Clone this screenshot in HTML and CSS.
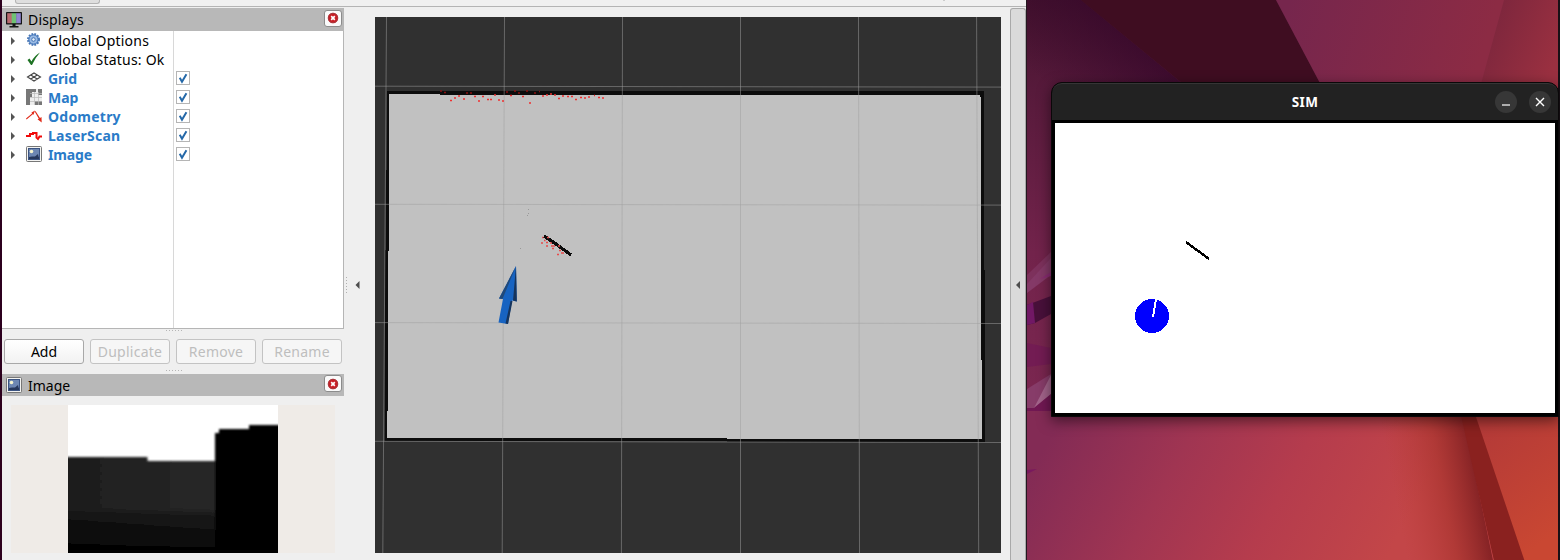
FILE: index.html
```html
<!DOCTYPE html>
<html lang="en">
<head>
<meta charset="utf-8">
<title>RViz and SIM</title>
<link rel="stylesheet" href="styles.css">
</head>
<body>
<svg class="defs" width="0" height="0">
  <defs>
    <symbol id="i-arrow" viewBox="0 0 6 8"><path d="M1 0L5 4L1 8Z" fill="#555"/></symbol>
    <symbol id="i-check" viewBox="0 0 14 14"><path d="M3.2 6.8L5.8 11.300L11 2.500" fill="none" stroke="#2468a8" stroke-width="2.300"/></symbol>
    <symbol id="i-image" viewBox="0 0 16 16"><rect x=".5" y=".5" width="15" height="15" rx="1" fill="#f4f4f2" stroke="#777"/><rect x="2" y="2" width="12" height="12" fill="#3c5482"/><rect x="3" y="3" width="10" height="8" fill="#6d87b2"/><circle cx="5.500" cy="5.500" r="1.800" fill="#f6f5d0"/><path d="M3 11L6 10.500L9 10.500L12 8L12.500 10.500L13 11V13H3Z" fill="#26385c"/></symbol>
    <symbol id="i-close" viewBox="0 0 12 12"><circle cx="6" cy="6" r="5.200" fill="#c91d24"/><circle cx="6" cy="6" r="4.700" fill="none" stroke="#a53a40"/><path d="M4.200 4.200L7.800 7.800M7.800 4.200L4.200 7.800" stroke="#fff" stroke-width="1.700"/></symbol>
  </defs>
</svg>
<main class="screen">
  <section class="rviz">
    <div class="toolbar"><div class="tool"></div><i class="speck"></i></div>
    <div class="workspace">
      <aside class="dock">
        <header class="dock-title">
          <svg class="icon" viewBox="0 0 16 16"><rect width="16" height="12.500" rx=".7" fill="#151515"/><rect x="1.200" y="1.200" width="4.800" height="10" fill="#b96a70"/><rect x="5.700" y="1.200" width="4.800" height="10" fill="#6fc274"/><rect x="10.200" y="1.200" width="4.600" height="10" fill="#9185d2"/><path d="M6.500 12H9.500V14H12.500V15.500H3.500V14H6.500Z" fill="#151515"/></svg>
          <span class="t-displays">Displays</span>
          <button class="close"><svg viewBox="0 0 12 12"><use href="#i-close"/></svg></button>
        </header>
        <div class="tree">
          <div class="row"><svg class="expander"><use href="#i-arrow"/></svg><svg class="icon" viewBox="0 0 16 16"><circle cx="7.500" cy="7.500" r="5.500" fill="#8fb2df" stroke="#4876b5" stroke-width="2" stroke-dasharray="1.700 1.200"/><circle cx="7.500" cy="7.500" r="4.500" fill="#9abae4" stroke="#4f7fbf"/><circle cx="7.500" cy="7.500" r="1.800" fill="#e5effb" stroke="#4574b3"/></svg><span class="label plain t-opt">Global Options</span></div>
          <div class="row"><svg class="expander"><use href="#i-arrow"/></svg><svg class="icon" viewBox="0 0 16 16"><path d="M1.500 9L3.500 7.500L5.500 10.500Q8.500 4.500 14 1.500Q9 7 6 14H5Z" fill="#1d7223"/></svg><span class="label plain t-status">Global Status: Ok</span></div>
          <div class="row"><svg class="expander"><use href="#i-arrow"/></svg><svg class="icon" viewBox="0 0 16 16"><path d="M1.500 7L8 3L14.500 7L8 11ZM4.800 5L11.200 9M11.200 5L4.800 9" fill="none" stroke="#444" stroke-width="1.100"/></svg><span class="label t-grid">Grid</span><span class="box"><svg><use href="#i-check"/></svg></span></div>
          <div class="row"><svg class="expander"><use href="#i-arrow"/></svg><svg class="icon" viewBox="0 0 16 16" shape-rendering="crispEdges"><rect width="16" height="16" fill="#eee"/><path d="M0 0H10V3H6V8H4V16H0ZM12 0H16V6H12ZM9 12H16V16H9Z" fill="#777"/><path d="M4 4H16M4 8H16M4 12H16M8 3V16M12 3V16" stroke="#bbb" fill="none" stroke-width=".7"/></svg><span class="label t-map">Map</span><span class="box"><svg><use href="#i-check"/></svg></span></div>
          <div class="row"><svg class="expander"><use href="#i-arrow"/></svg><svg class="icon" viewBox="0 0 16 16"><path d="M0 10.500L6 5.500L5.500 4.500L9 2.500L7.500 6.800L6.800 6.200L.6 11.600ZM9.500 3L14 10L15.500 9L15.700 14.500L11.500 11.200L12.800 10.700L8.800 3.800Z" fill="#e02a18"/></svg><span class="label t-odom">Odometry</span><span class="box"><svg><use href="#i-check"/></svg></span></div>
          <div class="row"><svg class="expander"><use href="#i-arrow"/></svg><svg class="icon" viewBox="0 0 16 16"><path d="M0 9H4V7H7V6H10.500V10.500L12 12L13.500 9.500H16" fill="none" stroke="#f00a0a" stroke-width="2"/></svg><span class="label t-laser">LaserScan</span><span class="box"><svg><use href="#i-check"/></svg></span></div>
          <div class="row"><svg class="expander"><use href="#i-arrow"/></svg><svg class="icon" viewBox="0 0 16 16"><use href="#i-image"/></svg><span class="label t-image">Image</span><span class="box"><svg><use href="#i-check"/></svg></span></div>
        </div>
        <div class="grip"></div>
        <div class="buttons">
          <button class="btn t-add">Add</button><button class="btn off t-dup" disabled>Duplicate</button><button class="btn off t-rem" disabled>Remove</button><button class="btn off t-ren" disabled>Rename</button>
        </div>
        <div class="grip second"></div>
        <header class="dock-title image-title">
          <svg class="icon" viewBox="0 0 16 16"><use href="#i-image"/></svg>
          <span class="t-imgtitle">Image</span>
          <button class="close"><svg viewBox="0 0 12 12"><use href="#i-close"/></svg></button>
        </header>
        <div class="camera">
          <svg width="210" height="148" viewBox="0 0 210 148">
            <defs>
              <linearGradient id="wall"><stop offset="0" stop-color="#1d1d1d"/><stop offset="1" stop-color="#282828"/></linearGradient>
              <linearGradient id="floor" x1="0" y1="0" x2="0" y2="1"><stop offset="0" stop-color="#000" stop-opacity="0"/><stop offset=".15" stop-color="#000" stop-opacity=".35"/><stop offset="1" stop-color="#000"/></linearGradient>
              <filter id="soft" x="-5%" y="-5%" width="110%" height="110%"><feGaussianBlur stdDeviation=".8"/></filter>
            </defs>
            <rect width="210" height="148" fill="#fff"/>
            <g filter="url(#soft)">
              <path d="M-4 52H79.500V56H148V152H-4Z" fill="url(#wall)"/>
              <rect x="-4" y="103" width="152" height="50" fill="url(#floor)"/>
              <path d="M147 152V28H151V24H181V20H214V152Z" fill="#000"/>
            </g>
          </svg>
        </div>
      </aside>
      <div class="splitter"><i class="dots"></i><svg width="5" height="8" viewBox="0 0 5 8"><path d="M4.500 0V8L.5 4Z" fill="#4d4d4d"/></svg></div>
      <svg class="map" width="626" height="536" viewBox="375 17 626 536">
        <rect x="375" y="17" width="626" height="536" fill="#303030"/>
        <g shape-rendering="crispEdges">
          <path d="M387 91H984V270H985V442H727V441H385V250H386V170H387Z" fill="#0c0c0c"/>
          <path d="M389 94H440V95H980V97H981V360H982V439H727V438H387V411H388V251H389Z" fill="#c1c1c1"/>
        </g>
        <path d="M386.500 17L382.800 553M504.500 17L502.200 553M622.500 17L621.400 553M740.500 17V553M858.500 17L859.500 553M976.600 17L978.700 553M375 86.200L1001 87.100M375 204.300L1001 205.100M375 322.600L1001 323.500M375 441.300L1001 442.500" stroke="#a0a0a0" stroke-opacity=".5" fill="none"/>
        <path d="M440 91h2M444 92.500h2M466 93h2M470 93h2M506 92h2M514 91h2M518 93h2M526 91h2M534 93h2M539 91.500h1" stroke="#8a1010" stroke-width="1.500"/>
        <path d="M450 100.500h2M454 98h2M458 96h2M463 99h2M474 96.500h2M478 101h2M482 96.500h2M487 99.500h2M490 99.500h2M494 95h2M498 100h2M502 101h2M510 95.500h2M522 96.500h2M529 103h2M542 96h2M546 95h2M550 94h2M554 95h2M558 98.500h2M562 96h2M567 96.500h2M571 96.500h2M575 99.500h2M580 97.500h2M584 98h2M588 97h2M594 95.500h1M598 97.500h2M602 98h2" stroke="#f03030" stroke-width="1.500"/>
        <path d="M544 236L556 244L571 255" stroke="#0b0b0b" stroke-width="3.200" fill="none" shape-rendering="crispEdges"/>
        <path d="M542 237.500h1.500M544 240.500h1.500M541 243h2M546 242.500h2M546 246h2M550 243h2M551 246h4M552 248.500h2M547 237.500h2M558 246h2M559 250.500h2M561 253h3M557 254.500h2" stroke="#e84b4b" stroke-width="1.500"/>
        <path d="M528 209.500h1M528 213.500h1M527 215.500h1M520 248.500h1" stroke="#999"/>
        <path d="M499 298.500L516 266L516.800 301.500L512 300.500L508 324L498.500 322.500L503 299Z" fill="#1763c1"/>
        <path d="M516 266L516.800 301.500L513 300.500ZM510.500 301H512.500L508 324L505.500 323.500Z" fill="#16345c"/>
        <path d="M499 298.500L516 266L502.500 299Z" fill="#214979"/>
      </svg>
      <div class="right-bar"><svg width="4" height="8" viewBox="0 0 4 8"><path d="M4 0V8L0 4Z" fill="#4d4d4d"/></svg></div>
    </div>
  </section>
  <section class="desktop">
    <svg class="wallpaper" viewBox="1027 0 531 560" preserveAspectRatio="none">
      <defs>
        <linearGradient id="left" x1="0" y1="0" x2="0" y2="1"><stop offset="0" stop-color="#45132e"/><stop offset=".16" stop-color="#571a3b"/><stop offset=".45" stop-color="#72234b"/><stop offset=".75" stop-color="#7c2751"/></linearGradient>
        <linearGradient id="shade1" gradientUnits="userSpaceOnUse" x1="1060" y1="100" x2="1130" y2="30"><stop offset="0" stop-color="#35072a" stop-opacity="0"/><stop offset="1" stop-color="#35072a" stop-opacity=".75"/></linearGradient>
        <linearGradient id="mid" gradientUnits="userSpaceOnUse" x1="1290" y1="0" x2="1480" y2="60"><stop offset="0" stop-color="#76264d"/><stop offset="1" stop-color="#8c2b44"/></linearGradient>
        <linearGradient id="topright" gradientUnits="userSpaceOnUse" x1="1488" y1="20" x2="1560" y2="50"><stop offset="0" stop-color="#7c263d"/><stop offset="1" stop-color="#9a3040"/></linearGradient>
        <linearGradient id="low" gradientUnits="userSpaceOnUse" x1="1070" y1="400" x2="1380" y2="570"><stop offset="0" stop-color="#832b55"/><stop offset=".35" stop-color="#a03552"/><stop offset=".65" stop-color="#b53c4d"/><stop offset="1" stop-color="#c34648"/></linearGradient>
        <linearGradient id="fold" gradientUnits="userSpaceOnUse" x1="1395" y1="497" x2="1482" y2="480"><stop offset="0" stop-color="#bb3d36" stop-opacity="0"/><stop offset=".55" stop-color="#a9342f" stop-opacity=".7"/><stop offset="1" stop-color="#7e1f22"/></linearGradient>
        <linearGradient id="orange" gradientUnits="userSpaceOnUse" x1="1480" y1="430" x2="1558" y2="530"><stop offset="0" stop-color="#b43a38"/><stop offset="1" stop-color="#c94732"/></linearGradient>
      </defs>
      <rect x="1027" width="531" height="560" fill="url(#left)"/>
      <path d="M1027 0H1081L1183 84L1205 102V130H1027Z" fill="url(#shade1)"/>
      <path d="M1081 0H1276L1330 102H1205Z" fill="#3f0d21"/>
      <path d="M1276 0H1505L1477 102H1330Z" fill="url(#mid)"/>
      <path d="M1504 0H1558V420H1476V102Z" fill="url(#topright)"/>
      <path d="M1027 275L1051 252V272L1027 293Z" fill="#7d315c"/><path d="M1027 284L1051 258V275L1027 293Z" fill="#843967"/>
      <path d="M1040 279L1051 272V276Z" fill="#8a2b73"/>
      <path d="M1027 305L1051 296V314L1035 323L1027 325Z" fill="#48103a"/><path d="M1027 305L1033 302L1035 323L1027 325Z" fill="#711865"/>
      <path d="M1027 343L1051 348V364L1027 367Z" fill="#731c53"/>
      <path d="M1027 389L1051 374V411H1027Z" fill="#873c69"/><path d="M1051 375L1034 408L1051 394Z" fill="#a2638a"/><path d="M1027 408H1034L1051 394V411H1027Z" fill="#711853"/>
      <path d="M1027 411H1558V560H1027Z" fill="url(#low)"/>
      <path d="M1370 411H1462L1494 565H1370Z" fill="url(#fold)"/>
      <path d="M1460 411H1475L1527 565H1495Z" fill="#8a211f"/>
      <path d="M1474 411H1558V565H1526Z" fill="url(#orange)"/>
      <path d="M1027 470L1037 469L1027 474Z" fill="#79195e"/>
    </svg>
    <div class="sim">
      <header class="sim-title">
        <span class="sim-name">SIM</span>
        <div class="controls">
          <button class="round"><svg viewBox="0 0 22 22"><path d="M7 14H15" stroke="#fff" stroke-width="1.200"/></svg></button>
          <button class="round"><svg viewBox="0 0 22 22"><path d="M7 7L15 15M15 7L7 15" stroke="#fff" stroke-width="1.400"/></svg></button>
        </div>
      </header>
      <svg class="arena" width="500" height="290" viewBox="1055 123 500 290" shape-rendering="crispEdges">
        <path d="M1186 242L1209 259" stroke="#000" stroke-width="2.400"/>
        <circle cx="1152" cy="316" r="17" fill="#00f"/>
        <path d="M1153 317L1156 299" stroke="#fff" stroke-width="2"/>
      </svg>
    </div>
  </section>
</main>
</body>
</html>
```
FILE: styles.css
```css
* { box-sizing: border-box; }
body { margin: 0; font-family: "Noto Sans", "Open Sans", sans-serif; font-size: 14px; color: #000; }
button { font: inherit; padding: 0; margin: 0; }
svg { display: block; flex: none; }
.defs { position: absolute; }
.screen { display: flex; width: 1560px; height: 560px; overflow: hidden; background: #181016; }
.rviz { width: 1027px; display: flex; flex-direction: column; background: #efefef; border-left: 2px solid #2c001e; border-right: 1px solid #241820; }
.toolbar { height: 7px; border-bottom: 1px solid #b4b4b4; background: #f0f0f0; display: flex; justify-content: space-between; }
.tool { width: 85px; height: 4px; margin-left: 13px; background: #dedede; border: 1px solid #b3b3b3; border-top: 0; border-radius: 0 0 3px 3px; }
.speck { width: 2px; height: 1px; margin-right: 81px; background: #ccc; }
.workspace { flex: 1; display: flex; padding-top: 1px; min-height: 0; }
.dock { width: 342px; }
.dock-title { height: 23px; background: #b8b8b8; display: flex; align-items: center; padding: 0 2px 0 4px; }
.dock-title .icon { margin-right: 6px; }
.dock-title span { flex: 1; }
.icon { width: 16px; height: 16px; }
.close { width: 18px; height: 17px; margin-top: -3px; border: 1px solid #8c8c8c; border-radius: 3px; background: #fafafa; display: grid; place-items: center; }
.close svg { width: 12px; height: 12px; }
.tree { height: 298px; background: linear-gradient(#d8d8d8, #d8d8d8) 171px 0 / 1px 100% no-repeat #fff; border: solid #b5b5b5; border-width: 0 1px 1px 0; }
.row { height: 19px; display: flex; align-items: center; }
.expander { width: 6px; height: 8px; margin: 0 13px 0 8px; }
.row .icon { margin: -2px 6px 0 -3px; }
.label { width: 128px; color: #2a7bc8; font-weight: 700; white-space: nowrap; line-height: 19px; }
.plain { color: #000; font-weight: 400; }
.t-opt, .t-status { letter-spacing: .22px; }
.t-grid, .t-image { letter-spacing: -.15px; }
.t-odom, .t-laser { letter-spacing: .23px; }
.t-displays { letter-spacing: .17px; }
.box { width: 14px; height: 14px; margin-top: -2px; background: #fff; border: 1px solid #b5b5b5; display: grid; place-items: center; }
.box svg { width: 12px; height: 12px; }
.grip { height: 2px; width: 17px; margin: 1px auto 0; transform: translateX(1px); background: repeating-linear-gradient(90deg, #b5b5b5 0 1px, transparent 1px 3px) 0 0 / 100% 1px no-repeat; }
.buttons { display: flex; gap: 6px; padding: 7px 2px 0; height: 32px; }
.btn { width: 80px; height: 25px; border: 1px solid #a8a8a8; border-radius: 3px; background: linear-gradient(#fff, #f2f2f2); color: #000; text-align: center; line-height: 21px; }
.off { border-color: #c3c3c3; background: #f6f6f6; color: #bebebe; }
.t-dup, .t-rem, .t-ren { letter-spacing: .25px; }
.second { margin-top: 6px; }
.image-title { height: 22px; margin-top: 2px; }
.camera { width: 324px; height: 148px; margin: 9px 0 0 9px; background: #efebe7; display: flex; padding-left: 57px; }
.splitter { width: 31px; display: flex; align-items: center; gap: 8px; padding: 2px 0 0 2px; }
.dots { width: 1px; height: 16px; background: repeating-linear-gradient(#b0b0b0 0 1px, transparent 1px 3px); }
.map { margin-top: 9px; }
.right-bar { width: 16px; margin-left: 9px; background: #dadada; border: 1px solid #a9a9a9; border-bottom: 0; border-radius: 3px 3px 0 0; display: flex; align-items: center; padding-left: 5px; }
.desktop { width: 531px; display: grid; }
.wallpaper, .sim { grid-area: 1 / 1; }
.wallpaper { width: 531px; height: 560px; }
.sim { margin: 82px 0 0 24px; width: 508px; height: 335px; border: 1px solid #0a0809; border-radius: 11px 11px 0 0; background: #000; box-shadow: 0 4px 14px rgba(0, 0, 0, .5); z-index: 1; }
.sim-title { height: 37px; border-radius: 10px 10px 0 0; background: #222; border-top: 1px solid #353535; display: grid; grid-template-columns: 1fr auto 1fr; align-items: center; color: #fff; font-weight: 700; font-size: 13.500px; }
.sim-name { grid-column: 2; letter-spacing: .4px; }
.controls { display: flex; gap: 12px; justify-content: flex-end; padding-right: 7px; }
.round { width: 22px; height: 22px; border: 0; border-radius: 50%; background: #373737; }
.arena { margin: 3px 0 0 3px; background: #fff; }
```
